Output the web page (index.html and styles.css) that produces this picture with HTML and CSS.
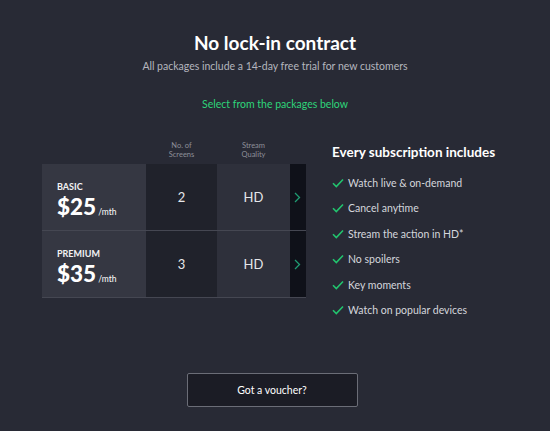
FILE: index.html
```html
<!DOCTYPE html>
<html lang="en">
<head>
    <meta charset="UTF-8">
    <title>Packages</title>
    <link rel="stylesheet" href="styles.css">
</head>
<body>
    <div class="page">
        <header class="intro">
            <h1 class="intro-title">No lock-in contract</h1>
            <p class="intro-sub">All packages include a 14-day free trial for new customers</p>
            <p class="intro-select">Select from the packages below</p>
        </header>

        <main class="plans">
            <div class="plan-table">
                <div class="plan-head">
                    <div class="col-name"></div>
                    <div class="col-screens head-label">No. of<br>Screens</div>
                    <div class="col-quality head-label">Stream<br>Quality</div>
                    <div class="col-go"></div>
                </div>

                <div class="plan-row">
                    <div class="col-name">
                        <div class="plan-name">BASIC</div>
                        <div class="plan-price">$25<span class="per">/mth</span></div>
                    </div>
                    <div class="col-screens cell">2</div>
                    <div class="col-quality cell">HD</div>
                    <div class="col-go cell">
                        <svg width="7" height="11" viewBox="0 0 7 11"><path d="M1 1l4.5 4.5L1 10" fill="none" stroke="#1f9c72" stroke-width="1.3"/></svg>
                    </div>
                </div>

                <div class="plan-row">
                    <div class="col-name">
                        <div class="plan-name">PREMIUM</div>
                        <div class="plan-price">$35<span class="per">/mth</span></div>
                    </div>
                    <div class="col-screens cell">3</div>
                    <div class="col-quality cell">HD</div>
                    <div class="col-go cell">
                        <svg width="7" height="11" viewBox="0 0 7 11"><path d="M1 1l4.5 4.5L1 10" fill="none" stroke="#1f9c72" stroke-width="1.3"/></svg>
                    </div>
                </div>
            </div>

            <section class="features">
                <h2 class="features-title">Every subscription includes</h2>
                <ul class="feature-list">
                    <li><svg class="tick" width="12" height="10" viewBox="0 0 12 10"><path d="M1 5.2l3.3 3.3L11 1.5" fill="none" stroke="#22c46e" stroke-width="1.6"/></svg>Watch live &amp; on-demand</li>
                    <li><svg class="tick" width="12" height="10" viewBox="0 0 12 10"><path d="M1 5.2l3.3 3.3L11 1.5" fill="none" stroke="#22c46e" stroke-width="1.6"/></svg>Cancel anytime</li>
                    <li><svg class="tick" width="12" height="10" viewBox="0 0 12 10"><path d="M1 5.2l3.3 3.3L11 1.5" fill="none" stroke="#22c46e" stroke-width="1.6"/></svg>Stream the action in HD*</li>
                    <li><svg class="tick" width="12" height="10" viewBox="0 0 12 10"><path d="M1 5.2l3.3 3.3L11 1.5" fill="none" stroke="#22c46e" stroke-width="1.6"/></svg>No spoilers</li>
                    <li><svg class="tick" width="12" height="10" viewBox="0 0 12 10"><path d="M1 5.2l3.3 3.3L11 1.5" fill="none" stroke="#22c46e" stroke-width="1.6"/></svg>Key moments</li>
                    <li><svg class="tick" width="12" height="10" viewBox="0 0 12 10"><path d="M1 5.2l3.3 3.3L11 1.5" fill="none" stroke="#22c46e" stroke-width="1.6"/></svg>Watch on popular devices</li>
                </ul>
            </section>
        </main>

        <div class="voucher">
            <button class="voucher-button">Got a voucher?</button>
        </div>
    </div>
</body>
</html>
```

FILE: styles.css
```css
* {
    margin: 0;
    padding: 0;
    box-sizing: border-box;
}

body {
    font-family: Lato, 'Open Sans', sans-serif;
    background-color: #282a35;
    color: white;
    min-height: 100vh;
}

.page {
    width: 550px;
    height: 431px;
    padding-top: 31px;
}

/* Intro */
.intro {
    text-align: center;
}

.intro-title {
    font-size: 19px;
    font-weight: 700;
    line-height: 24px;
    color: #ffffff;
}

.intro-sub {
    font-size: 10.5px;
    line-height: 14px;
    margin-top: 4px;
    color: #b4b6be;
}

.intro-select {
    font-size: 10.5px;
    line-height: 14px;
    margin-top: 24px;
    color: #2ed57a;
}

/* Plans */
.plans {
    display: flex;
    margin-top: 30px;
    padding-left: 42px;
    gap: 26px;
}

.plan-table {
    width: 264px;
}

.plan-head,
.plan-row {
    display: flex;
}

.plan-head {
    height: 23px;
}

.head-label {
    font-size: 7.5px;
    line-height: 9px;
    color: #8d8f98;
    text-align: center;
}

.col-name {
    width: 104px;
}

.col-screens {
    width: 71px;
}

.col-quality {
    width: 73px;
}

.col-go {
    width: 16px;
}

.plan-row {
    height: 67px;
    border-bottom: 1px solid #454752;
}

.plan-row .col-name {
    background-color: #353742;
    padding: 17px 0 0 15px;
}

.plan-row .col-screens {
    background-color: #20222b;
}

.plan-row .col-quality {
    background-color: #2e303b;
}

.plan-row .col-go {
    background-color: #0f1119;
}

.cell {
    display: flex;
    align-items: center;
    justify-content: center;
    font-size: 13px;
    color: #e6e7ea;
}

.plan-row .col-go {
    justify-content: flex-start;
    padding-left: 4px;
}

.plan-name {
    font-size: 9px;
    font-weight: 700;
    line-height: 12px;
    color: #f2f2f4;
}

.plan-price {
    font-size: 22.5px;
    font-weight: 900;
    line-height: 26px;
    margin-top: 1px;
    color: #ffffff;
}

.per {
    font-size: 8.5px;
    font-weight: 400;
    margin-left: 2px;
}

/* Features */
.features {
    padding-top: 3px;
}

.features-title {
    font-size: 13.5px;
    font-weight: 700;
    line-height: 16px;
    color: #ffffff;
}

.feature-list {
    list-style: none;
    margin-top: 10px;
}

.feature-list li {
    display: flex;
    align-items: center;
    gap: 4px;
    height: 25.5px;
    font-size: 10.5px;
    color: #d4d6dc;
}

.tick {
    flex-shrink: 0;
}

/* Voucher */
.voucher {
    display: flex;
    justify-content: center;
    margin-top: 50px;
    padding-right: 6px;
}

.voucher-button {
    width: 171px;
    height: 34px;
    background-color: #1b1c25;
    color: #ffffff;
    border: 1px solid #6b6d77;
    border-radius: 2px;
    font-family: Lato, 'Open Sans', sans-serif;
    font-size: 10.5px;
}
```
